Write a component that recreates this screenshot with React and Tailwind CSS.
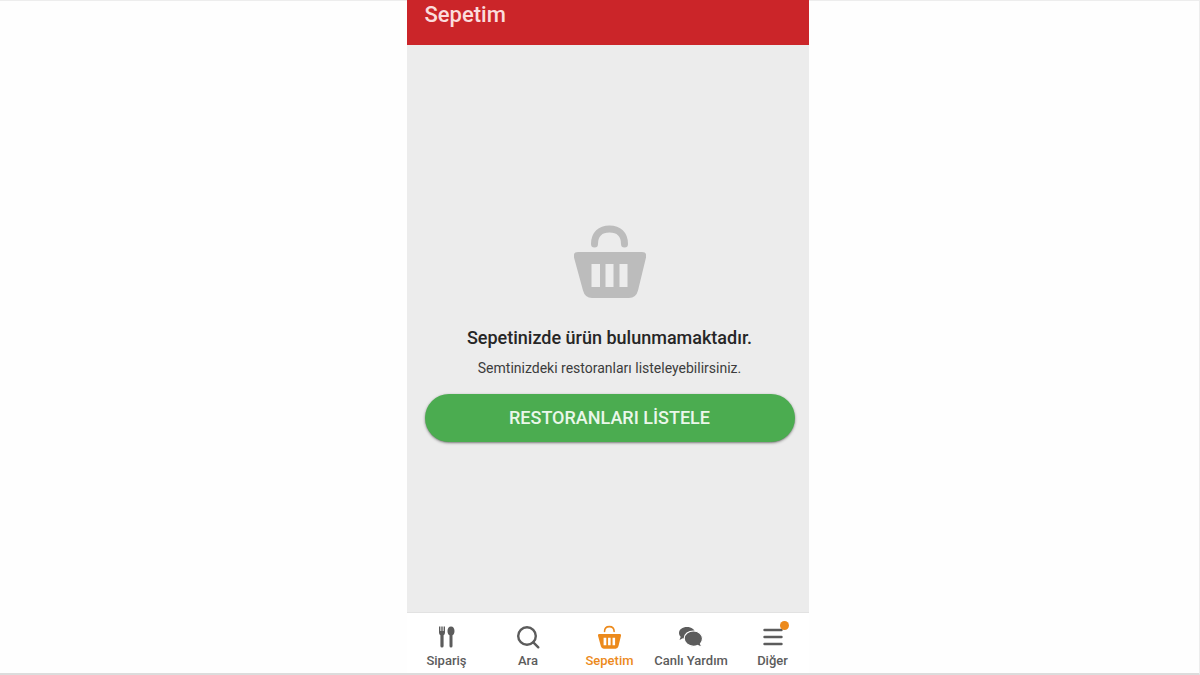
import React from "react";

function BasketIcon({ className, handle = 7 }) {
  return (
    <svg viewBox="0 0 72 73" className={className} fill="currentColor" aria-hidden="true">
      <path
        d="M20.500 19C20.500 9 26.500 4 35.500 4S50.500 9 50.500 19"
        fill="none"
        stroke="currentColor"
        strokeWidth={handle}
        strokeLinecap="round"
      />
      <path
        fillRule="evenodd"
        d="M4 27H68Q73 27 72 32.500L64 65.500Q62 73 55 73H18Q11 73 9 65.500L0 32.500Q-1 27 4 27ZM17.500 39V62H26V39ZM31.500 39V62H39.500V39ZM45.500 39V62H53.500V39Z"
      />
    </svg>
  );
}

function CutleryIcon() {
  return (
    <svg viewBox="0 0 18 24" className="h-6 w-[18px]" fill="currentColor" aria-hidden="true">
      <path d="M1 1.500H2.400V6H3.300V1.500H4.700V6H5.600V1.500H7V7.500Q7 9.500 5.600 10.200V21Q5.600 22.500 4 22.500T2.400 21V10.200Q1 9.500 1 7.500Z" />
      <path d="M13 1.500C15.200 1.500 16.500 3.500 16.500 6C16.500 8.200 15.700 9.700 14.500 10.300V21Q14.500 22.500 13 22.500T11.500 21V10.300C10.300 9.700 9.500 8.200 9.500 6C9.500 3.500 10.800 1.500 13 1.500Z" />
    </svg>
  );
}

function SearchIcon() {
  return (
    <svg viewBox="0 0 24 24" className="size-6" fill="none" stroke="currentColor" strokeWidth="2.400" aria-hidden="true">
      <circle cx="11" cy="11" r="8.800" />
      <path d="M17.300 17.300L22.300 22.300" strokeLinecap="round" />
    </svg>
  );
}

function ChatIcon() {
  return (
    <svg viewBox="0 0 26 24" className="h-6 w-[26px]" fill="currentColor" aria-hidden="true">
      <path d="M9 2C13.500 2 17 4.500 17 8C17 11.500 13.500 14 9 14C7.500 14 6 13.700 4.800 13.200L1.500 15L2.700 11.700C1.600 10.700 1 9.400 1 8C1 4.500 4.500 2 9 2Z" />
      <path
        d="M15.500 6C20.500 6 24.500 9.300 24.500 13.500C24.500 15.500 23.800 17.300 22.500 18.600L23.800 22.300L19.500 20.500C18.300 21 17 21.300 15.500 21.300C10.500 21.300 6.200 18 6.200 13.500S10.500 6 15.500 6Z"
        stroke="white"
        strokeWidth="1.200"
      />
    </svg>
  );
}

function MenuIcon() {
  return (
    <span className="relative">
      <svg viewBox="0 0 20 24" className="h-6 w-5" stroke="currentColor" strokeWidth="2.400" aria-hidden="true">
        <path d="M1.500 5H18.500M1.500 12H18.500M1.500 19H18.500" strokeLinecap="round" />
      </svg>
      <span className="absolute -top-1 -right-1.5 size-[9px] rounded-full bg-[#ec8a1c]" />
    </span>
  );
}

const tabs = [
  { label: "Sipariş", icon: <CutleryIcon /> },
  { label: "Ara", icon: <SearchIcon /> },
  { label: "Sepetim", icon: <BasketIcon className="h-6 w-[23px]" handle={5} />, active: true },
  { label: "Canlı Yardım", icon: <ChatIcon /> },
  { label: "Diğer", icon: <MenuIcon /> },
];

function App() {
  return (
    <div className="flex min-h-screen justify-center border-t border-r border-b-2 border-t-[#ededed] border-r-[#ededed] border-b-[#dcdcdc] bg-[#fefefe] pl-4 font-['Roboto',sans-serif]">
      <div className="flex w-full max-w-[402px] flex-col">
        <header className="-mt-px h-[45px] bg-[#cb2529] px-[18px]">
          <h1 className="text-[22px] leading-[30px] font-medium text-[#fbdcdc]">Sepetim</h1>
        </header>

        <main className="flex flex-1 flex-col items-center justify-center bg-[#ececec] pt-2.5 pr-3.5 pl-[18px] text-center">
          <BasketIcon className="h-[73px] w-[72px] text-[#bcbcbc]" />
          <h2 className="mt-7 text-lg leading-6 font-medium text-[#262626]">
            Sepetinizde ürün bulunmamaktadır.
          </h2>
          <p className="mt-2 text-sm leading-5 text-[#3c3c3c]">
            Semtinizdeki restoranları listeleyebilirsiniz.
          </p>
          <button
            type="button"
            className="mt-4 h-12 w-full rounded-full bg-[#4bac50] text-lg font-medium text-[#eaf7ea] shadow-sm shadow-black/40"
          >
            RESTORANLARI LİSTELE
          </button>
        </main>

        <nav className="flex h-[61px] justify-between border-t border-[#e2e2e2] bg-white pt-3 pr-1 pl-2">
          {tabs.map((tab) => (
            <a
              key={tab.label}
              href="#"
              className={`flex w-16 flex-col items-center gap-1 text-[13px] leading-4 font-medium whitespace-nowrap ${
                tab.active ? "text-[#ec8a1c]" : "text-[#5c5c5c]"
              }`}
            >
              {tab.icon}
              <span>{tab.label}</span>
            </a>
          ))}
        </nav>
      </div>
    </div>
  );
}

export default App;
